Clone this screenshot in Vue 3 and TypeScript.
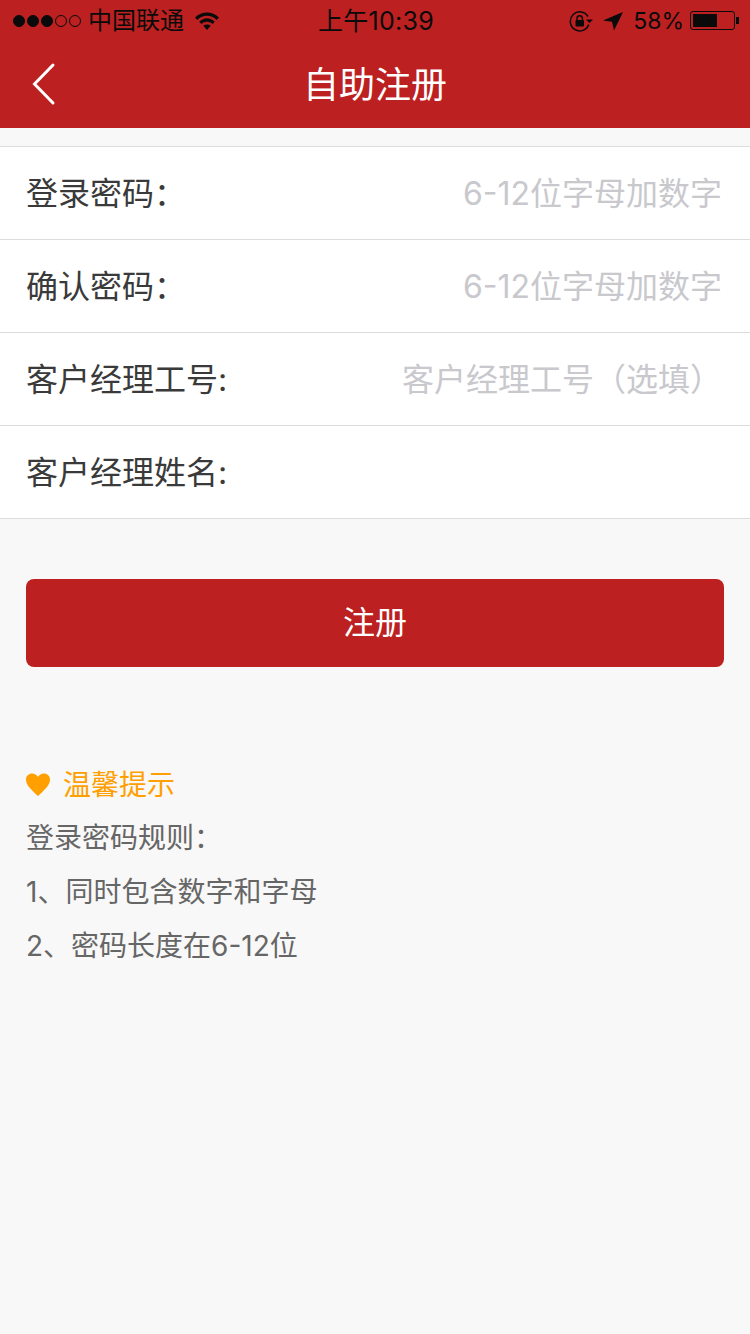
<script setup lang="ts">
const fields = [
  { label: '登录密码：', placeholder: '6-12位字母加数字' },
  { label: '确认密码：', placeholder: '6-12位字母加数字' },
  { label: '客户经理工号:', placeholder: '客户经理工号（选填）' },
  { label: '客户经理姓名:', placeholder: '' },
]
const tips = ['登录密码规则：', '1、同时包含数字和字母', '2、密码长度在6-12位']
</script>

<template>
  <div class="page">
    <header class="top">
      <div class="status">
        <div class="status-left">
          <span class="dots"><i v-for="n in 3" :key="n" class="on"></i><i v-for="n in 2" :key="n + 3"></i></span>
          <span class="carrier">中国联通</span>
          <svg class="wifi" width="24" height="18" viewBox="0 0 24 18">
            <path d="M0 5.500C7-1.300 17-1.300 24 5.500l-2.300 2.400C15.800 2.300 8.200 2.300 2.300 7.900z" />
            <path d="M4.200 9.700C9 5 15 5 19.800 9.700l-2.300 2.400c-3.300-3-7.700-3-11 0z" />
            <path d="M8.300 13.800c2.200-1.900 5.200-1.900 7.400 0L12 18z" />
          </svg>
        </div>
        <div class="clock">上午10:39</div>
        <div class="status-right">
          <svg class="lock" width="24" height="22" viewBox="0 0 24 22" fill="none">
            <path d="M19.800 14.500A9.500 9.500 0 1 1 19 6.500" stroke="#0a0a0a" stroke-width="1.500" />
            <path d="M17 9.500h7l-3.500 3.500z" fill="#0a0a0a" />
            <path d="M8 10.500V8.500a2.700 2.700 0 0 1 5.400 0v2" stroke="#0a0a0a" stroke-width="1.500" />
            <rect x="6.500" y="10" width="8.500" height="6.500" rx="1" fill="#0a0a0a" />
          </svg>
          <svg class="arrow" width="20" height="20" viewBox="0 0 20 20">
            <path d="M20 1 0 9.500l9 1.200 2 8.800z" fill="#0a0a0a" />
          </svg>
          <span class="pct">58%</span>
          <div class="battery"><div class="level"></div></div>
          <div class="nub"></div>
        </div>
      </div>
      <div class="nav">
        <svg class="back" width="26" height="44" viewBox="0 0 26 44" fill="none">
          <path d="M22 3 3.500 22 22 41" stroke="#fff" stroke-width="3" stroke-linecap="round" />
        </svg>
        <h1>自助注册</h1>
      </div>
    </header>

    <section class="form">
      <div v-for="f in fields" :key="f.label" class="row">
        <span class="label">{{ f.label }}</span>
        <span class="hint">{{ f.placeholder }}</span>
      </div>
    </section>

    <button class="submit">注册</button>

    <section class="tips">
      <div class="tips-title">
        <svg width="24" height="23" viewBox="0 0 24 23">
          <path d="M12 23C5 16.500 0 12 0 6.500 0 3 2.800.5 6 .5c2.500 0 4.800 1.300 6 3.500C13.200 1.800 15.500.5 18 .5c3.200 0 6 2.500 6 6C24 12 19 16.500 12 23z" fill="#ff9f00" />
        </svg>
        <span class="tips-name">温馨提示</span>
      </div>
      <p v-for="t in tips" :key="t">{{ t }}</p>
    </section>
  </div>
</template>

<style>
body { margin: 0; background: #f8f8f8; }
</style>

<style scoped>
.page {
  width: 750px;
  height: 1334px;
  overflow: hidden;
  background: #f8f8f8;
  font-family: Inter, "Noto Sans CJK SC", sans-serif;
}
.top { height: 128px; background: #bc2020; }
.status {
  height: 40px;
  display: grid;
  grid-template-columns: 1fr auto 1fr;
  align-items: center;
  color: #0a0a0a;
  padding: 0 11px 0 13px;
}
.status-left, .status-right { display: flex; align-items: center; }
.status-right { justify-content: flex-end; }
.dots { display: flex; gap: 2px; }
.dots i {
  width: 12px;
  height: 12px;
  box-sizing: border-box;
  border: 1.500px solid #0a0a0a;
  border-radius: 50%;
}
.dots i.on { background: #0a0a0a; }
.carrier { font-size: 24px; line-height: 42px; margin-left: 7px; }
.wifi { margin-left: 11px; fill: #0a0a0a; }
.clock { font-size: 25px; line-height: 42px; letter-spacing: 0.3px; }
.lock { margin-right: 10px; }
.arrow { margin-right: 10px; }
.pct { font-size: 23px; line-height: 40px; margin-right: 6px; }
.battery {
  width: 45px;
  height: 19px;
  box-sizing: border-box;
  border: 1.500px solid #0a0a0a;
  border-radius: 3px;
  padding: 2px;
  margin-bottom: 2px;
}
.level { width: 24px; height: 100%; background: #0a0a0a; }
.nub { width: 3px; height: 7px; background: #0a0a0a; margin: 0 0 2px 1px; }
.nav {
  height: 88px;
  position: relative;
  display: flex;
  align-items: center;
  justify-content: center;
}
.back { position: absolute; left: 31px; top: 22px; }
.nav h1 { margin: 0 0 5px; font-size: 36px; font-weight: 400; color: #fff; }
.form {
  margin-top: 18px;
  background: #fff;
  border-top: 1px solid #dcdcdc;
}
.row {
  height: 93px;
  box-sizing: border-box;
  border-bottom: 1px solid #dcdcdc;
  display: flex;
  align-items: center;
  justify-content: space-between;
  padding: 0 28px 5px 26px;
}
.label { font-size: 32px; color: #3a3a3a; }
.hint { font-size: 32px; color: #c8c8cd; }
.submit {
  display: block;
  width: 698px;
  height: 88px;
  margin: 60px 26px 0;
  padding: 0 0 7px;
  border: none;
  border-radius: 8px;
  background: #bc2020;
  color: #fff;
  font-family: inherit;
  font-size: 32px;
}
.tips { margin-top: 96px; padding: 0 26px; }
.tips-title {
  display: flex;
  align-items: center;
  gap: 13px;
  height: 42px;
  color: #ff9f00;
  font-size: 28px;
}
.tips-name { margin-bottom: 2px; }
.tips p {
  margin: 12px 0 0;
  height: 42px;
  line-height: 42px;
  font-size: 28px;
  color: #666;
}
</style>
